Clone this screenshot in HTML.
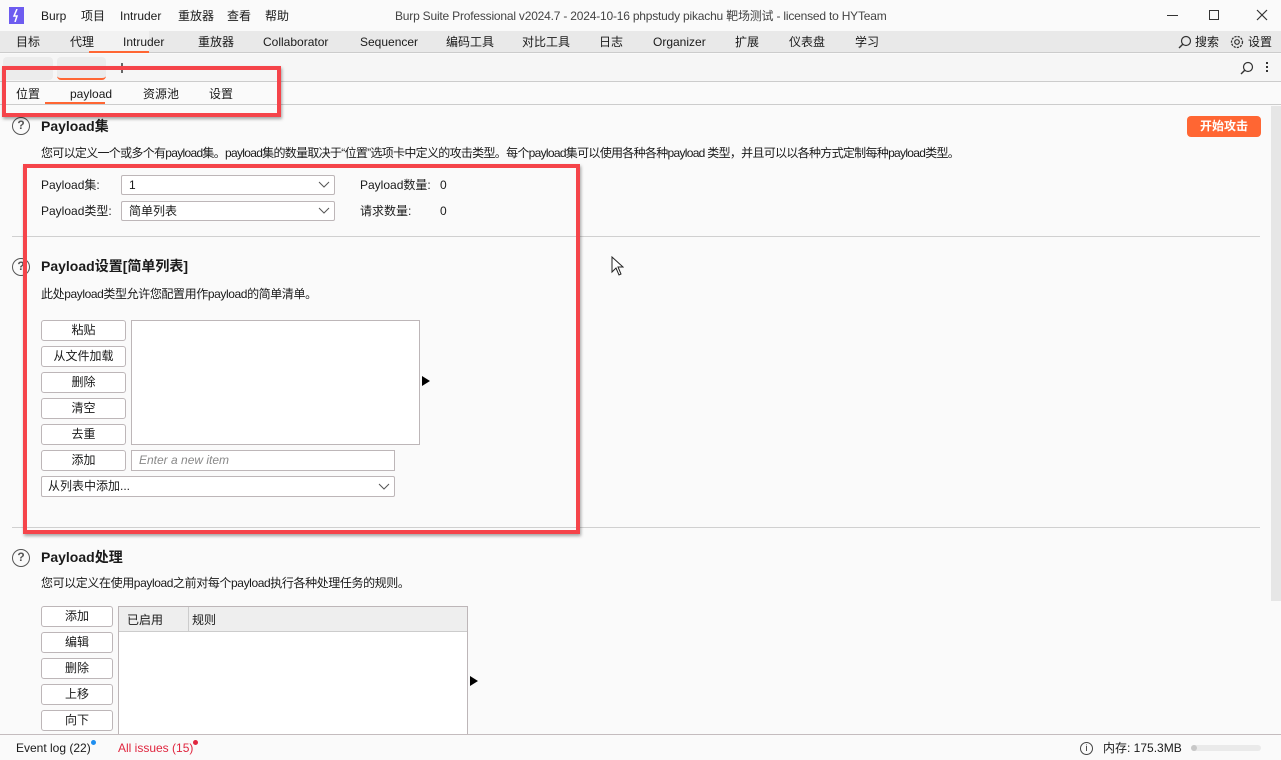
<!DOCTYPE html>
<html><head><meta charset="utf-8"><style>
*{margin:0;padding:0;box-sizing:border-box}
body{width:1281px;height:760px;overflow:hidden;background:#fafafa;font-family:"Liberation Sans","Noto Sans CJK SC",sans-serif;font-size:12px;color:#1a1a1a;position:relative}
.a{position:absolute;white-space:nowrap;line-height:16px}
.btn{position:absolute;border:1px solid #bdb6b8;border-radius:3px;background:#fff;text-align:center;line-height:19px;font-size:12px}
.box{position:absolute;border:1px solid #bdb6b8;background:#fff}
.sel{position:absolute;border:1px solid #bdb6b8;border-radius:2px;background:#fff;padding-left:7px;line-height:18px}
.sel svg{position:absolute;right:4px;top:5px}
.h{font-weight:bold;font-size:14px;line-height:20px}
.q{position:absolute;width:18px;height:18px;border:1.5px solid #555;border-radius:50%;text-align:center;line-height:15px;font-size:12px;color:#555;font-weight:bold}
.red{position:absolute;border:4px solid #f5444a;box-shadow:1px 2px 3px rgba(0,0,0,.35)}
</style></head><body>
<!-- title bar -->
<div class="a" style="left:9px;top:7px;width:15px;height:17px;background:#6d5cf0"></div>
<svg class="a" style="left:12px;top:9px" width="9" height="13"><path d="M5 0L2 7h3L3 13" stroke="#fff" stroke-width="1.5" fill="none"/></svg>
<div class="a" style="left:41px;top:8px">Burp</div>
<div class="a" style="left:81px;top:8px">项目</div>
<div class="a" style="left:120px;top:8px">Intruder</div>
<div class="a" style="left:178px;top:8px">重放器</div>
<div class="a" style="left:227px;top:8px">查看</div>
<div class="a" style="left:265px;top:8px">帮助</div>
<div class="a" style="left:395px;top:8px;color:#444;letter-spacing:-0.2px">Burp Suite Professional v2024.7 - 2024-10-16 phpstudy pikachu 靶场测试 - licensed to HYTeam</div>
<div class="a" style="left:1167px;top:15px;width:11px;height:1px;background:#333"></div>
<div class="a" style="left:1209px;top:10px;width:10px;height:10px;border:1px solid #333"></div>
<svg class="a" style="left:1256px;top:9px" width="12" height="12"><path d="M1 1L11 11M11 1L1 11" stroke="#333" stroke-width="1.2"/></svg>
<!-- main tabs -->
<div class="a" style="left:0;top:31px;width:1281px;height:22px;background:#e9e9e9;border-bottom:1px solid #ccc"></div>
<div class="a" style="left:89px;top:31px;width:60px;height:22px;background:#f2f2f2;border-bottom:2px solid #ff6633"></div>
<div class="a" style="left:16px;top:34px">目标</div>
<div class="a" style="left:70px;top:34px">代理</div>
<div class="a" style="left:123px;top:34px">Intruder</div>
<div class="a" style="left:198px;top:34px">重放器</div>
<div class="a" style="left:263px;top:34px">Collaborator</div>
<div class="a" style="left:360px;top:34px">Sequencer</div>
<div class="a" style="left:446px;top:34px">编码工具</div>
<div class="a" style="left:522px;top:34px">对比工具</div>
<div class="a" style="left:599px;top:34px">日志</div>
<div class="a" style="left:653px;top:34px">Organizer</div>
<div class="a" style="left:735px;top:34px">扩展</div>
<div class="a" style="left:789px;top:34px">仪表盘</div>
<div class="a" style="left:855px;top:34px">学习</div>
<svg class="a" style="left:1178px;top:35px" width="14" height="14"><circle cx="8" cy="6" r="4.5" stroke="#333" fill="none" stroke-width="1.2"/><path d="M5 9L1 13" stroke="#333" stroke-width="1.4"/></svg>
<div class="a" style="left:1195px;top:34px">搜索</div>
<svg class="a" style="left:1229px;top:34px" width="16" height="16"><circle cx="8" cy="8" r="5.5" stroke="#333" fill="none" stroke-width="1.3" stroke-dasharray="2.2 1.1"/><circle cx="8" cy="8" r="2.3" stroke="#333" fill="none" stroke-width="1.2"/></svg>
<div class="a" style="left:1248px;top:34px">设置</div>
<!-- sub row -->
<div class="a" style="left:0;top:54px;width:1281px;height:28px;background:#f6f6f6;border-bottom:1px solid #ccc"></div>
<div class="a" style="left:3px;top:57px;width:50px;height:23px;background:#ececec;border-radius:4px"></div>
<div class="a" style="left:57px;top:57px;width:49px;height:23px;background:#ececec;border-radius:4px;border-bottom:2px solid #ff6633"></div>
<div class="a" style="left:121px;top:63px;width:2px;height:10px;background:#666"></div>
<svg class="a" style="left:1240px;top:61px" width="14" height="14"><circle cx="8" cy="6" r="4.5" stroke="#333" fill="none" stroke-width="1.2"/><path d="M5 9L1 13" stroke="#333" stroke-width="1.4"/></svg>
<div class="a" style="left:1266px;top:62px;width:2px;height:2px;background:#333;box-shadow:0 4px #333,0 8px #333"></div>
<!-- tabs 3 -->
<div class="a" style="left:0;top:82px;width:1281px;height:23px;background:#fafafa;border-bottom:1px solid #ccc"></div>
<div class="a" style="left:16px;top:86px">位置</div>
<div class="a" style="left:70px;top:86px">payload</div>
<div class="a" style="left:45px;top:102px;width:60px;height:2px;background:#ff6633"></div>
<div class="a" style="left:143px;top:86px">资源池</div>
<div class="a" style="left:209px;top:86px">设置</div>
<!-- scrollbar -->
<div class="a" style="left:1271px;top:106px;width:10px;height:495px;background:#e6e6e6"></div>
<!-- section 1 -->
<div class="q" style="left:12px;top:117px">?</div>
<div class="a h" style="left:41px;top:116px">Payload集</div>
<div class="a" style="left:41px;top:145px;letter-spacing:-0.7px">您可以定义一个或多个有payload集。payload集的数量取决于“位置”选项卡中定义的攻击类型。每个payload集可以使用各种各种payload 类型，并且可以以各种方式定制每种payload类型。</div>
<div class="a" style="left:1187px;top:116px;width:74px;height:21px;background:#ff6633;border-radius:4px;color:#fff;font-weight:bold;text-align:center;line-height:21px">开始攻击</div>
<div class="a" style="left:41px;top:177px">Payload集:</div>
<div class="sel" style="left:121px;top:175px;width:214px;height:20px">1<svg width="12" height="8"><path d="M1 1l5 5 5-5" stroke="#555" fill="none"/></svg></div>
<div class="a" style="left:360px;top:177px">Payload数量:</div><div class="a" style="left:440px;top:177px">0</div>
<div class="a" style="left:41px;top:203px">Payload类型:</div>
<div class="sel" style="left:121px;top:201px;width:214px;height:20px">简单列表<svg width="12" height="8"><path d="M1 1l5 5 5-5" stroke="#555" fill="none"/></svg></div>
<div class="a" style="left:360px;top:203px">请求数量:</div><div class="a" style="left:440px;top:203px">0</div>
<div class="a" style="left:12px;top:236px;width:1248px;height:1px;background:#d0d0d0"></div>
<!-- section 2 -->
<div class="q" style="left:12px;top:258px">?</div>
<div class="a h" style="left:41px;top:256px">Payload设置[简单列表]</div>
<div class="a" style="left:41px;top:286px;letter-spacing:-0.4px">此处payload类型允许您配置用作payload的简单清单。</div>
<div class="btn" style="left:41px;top:320px;width:85px;height:21px">粘贴</div>
<div class="btn" style="left:41px;top:346px;width:85px;height:21px">从文件加载</div>
<div class="btn" style="left:41px;top:372px;width:85px;height:21px">删除</div>
<div class="btn" style="left:41px;top:398px;width:85px;height:21px">清空</div>
<div class="btn" style="left:41px;top:424px;width:85px;height:21px">去重</div>
<div class="btn" style="left:41px;top:450px;width:85px;height:21px">添加</div>
<div class="box" style="left:131px;top:320px;width:289px;height:125px"></div>
<svg class="a" style="left:422px;top:376px" width="8" height="10"><path d="M0 0L8 5L0 10z"/></svg>
<div class="box" style="left:131px;top:450px;width:264px;height:21px;padding-left:7px;line-height:19px;color:#888;font-style:italic">Enter a new item</div>
<div class="sel" style="left:41px;top:476px;width:354px;height:21px;line-height:19px;padding-left:6px">从列表中添加...<svg width="12" height="8" style="top:6px"><path d="M1 1l5 5 5-5" stroke="#555" fill="none"/></svg></div>
<div class="a" style="left:12px;top:527px;width:1248px;height:1px;background:#d0d0d0"></div>
<!-- section 3 -->
<div class="q" style="left:12px;top:549px">?</div>
<div class="a h" style="left:41px;top:547px">Payload处理</div>
<div class="a" style="left:41px;top:575px;letter-spacing:-0.4px">您可以定义在使用payload之前对每个payload执行各种处理任务的规则。</div>
<div class="btn" style="left:41px;top:606px;width:72px;height:21px">添加</div>
<div class="btn" style="left:41px;top:632px;width:72px;height:21px">编辑</div>
<div class="btn" style="left:41px;top:658px;width:72px;height:21px">删除</div>
<div class="btn" style="left:41px;top:684px;width:72px;height:21px">上移</div>
<div class="btn" style="left:41px;top:710px;width:72px;height:21px">向下</div>
<div class="box" style="left:118px;top:606px;width:350px;height:135px"></div>
<div class="a" style="left:119px;top:607px;width:348px;height:25px;background:#eee;border-bottom:1px solid #ccc"></div>
<div class="a" style="left:188px;top:607px;width:1px;height:25px;background:#ccc"></div>
<div class="a" style="left:127px;top:612px">已启用</div>
<div class="a" style="left:192px;top:612px">规则</div>
<svg class="a" style="left:470px;top:676px" width="8" height="10"><path d="M0 0L8 5L0 10z"/></svg>
<!-- status bar -->
<div class="a" style="left:0;top:734px;width:1281px;height:26px;background:#fafafa;border-top:1px solid #c4bcbe"></div>
<div class="a" style="left:16px;top:740px">Event log (22)</div>
<div class="a" style="left:91px;top:740px;width:5px;height:5px;border-radius:50%;background:#1e8ef0"></div>
<div class="a" style="left:118px;top:740px;color:#e0263f">All issues (15)</div>
<div class="a" style="left:193px;top:740px;width:5px;height:5px;border-radius:50%;background:#e0263f"></div>
<div class="a" style="left:1080px;top:742px;width:13px;height:13px;border:1.2px solid #444;border-radius:50%;font-size:9px;text-align:center;line-height:11px">i</div>
<div class="a" style="left:1103px;top:740px">内存: 175.3MB</div>
<div class="a" style="left:1191px;top:745px;width:70px;height:6px;border-radius:3px;background:#eaeaea"></div>
<div class="a" style="left:1191px;top:745px;width:6px;height:6px;border-radius:3px;background:#c8c8c8"></div>
<!-- red highlight boxes -->
<div class="red" style="left:2px;top:66px;width:279px;height:51px"></div>
<div class="red" style="left:23px;top:164px;width:557px;height:370px"></div>
<!-- cursor -->
<svg class="a" style="left:611px;top:256px" width="13" height="20"><path d="M1 1L1 16L5 12L8 19L10 18L7 11L12 11Z" fill="#fff" stroke="#222" stroke-width="1"/></svg>
</body></html>
